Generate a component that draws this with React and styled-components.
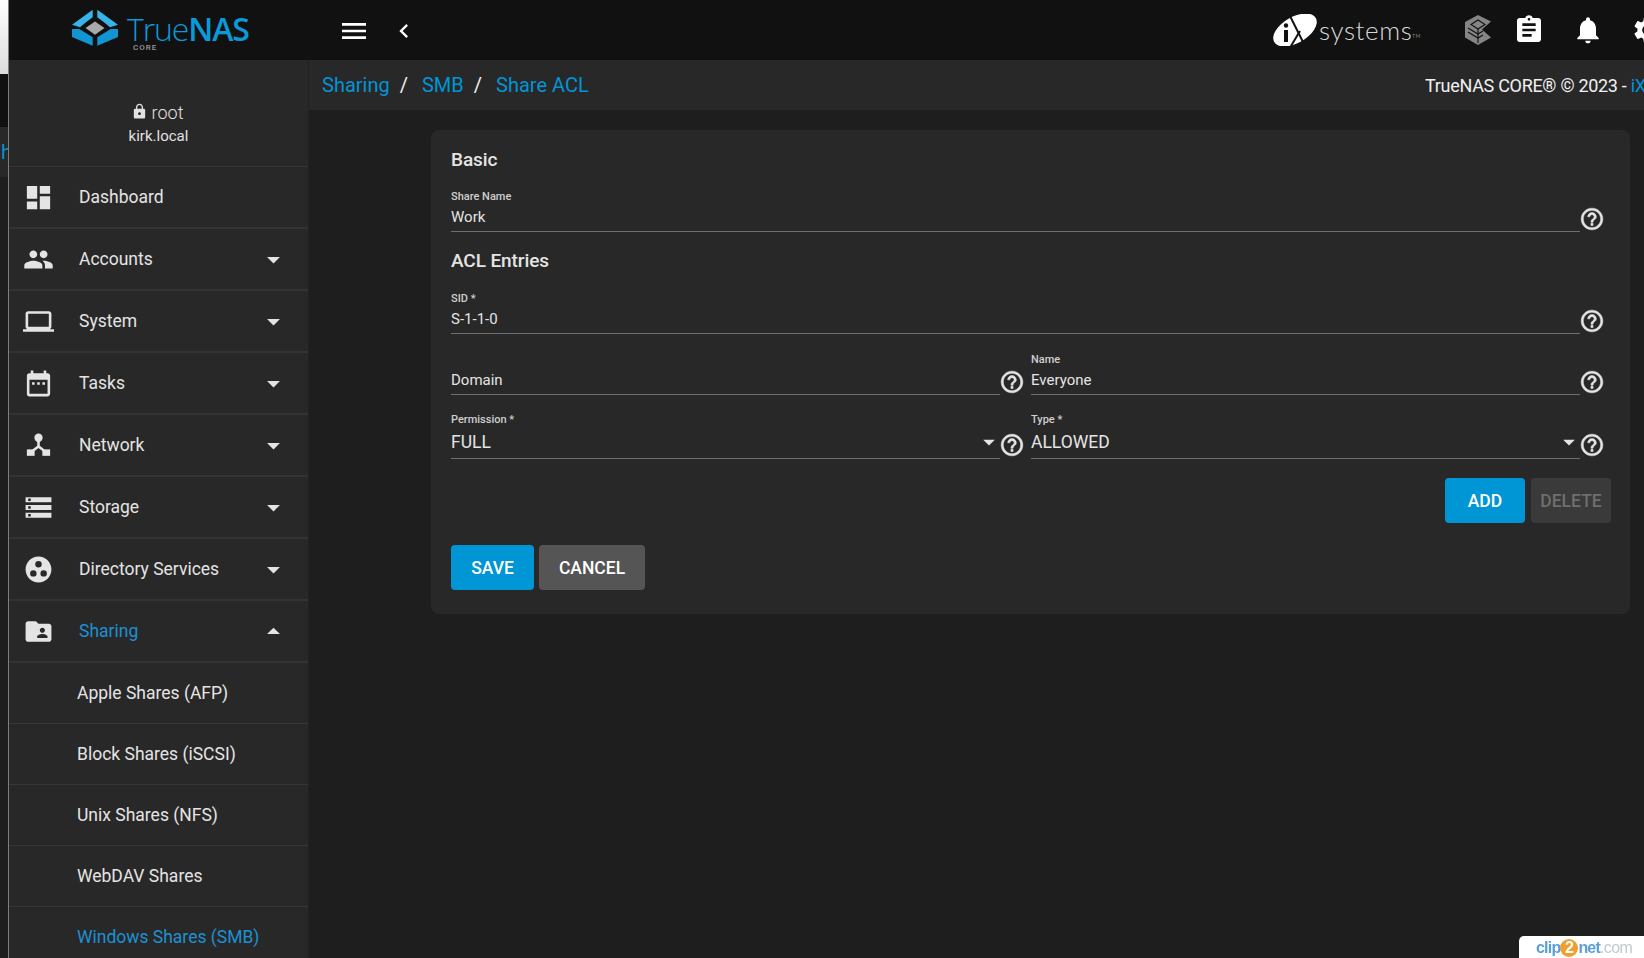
import React from 'react';
import styled, { createGlobalStyle } from 'styled-components';
import {
    MdDashboard,
    MdPeople,
    MdLaptop,
    MdDateRange,
    MdStorage,
    MdGroupWork,
    MdFolderShared,
    MdLock,
    MdMenu,
    MdChevronLeft,
    MdAssignment,
    MdNotifications,
    MdSettings,
    MdHelpOutline,
    MdArrowDropDown,
    MdArrowDropUp,
} from 'react-icons/md';

const GlobalStyle = createGlobalStyle`
    html, body {
        margin: 0;
        height: 100%;
        overflow: hidden;
        background: #1e1e1e;
        font-family: Roboto, "Liberation Sans", sans-serif;
    }
`;

const Page = styled.div`
    display: flex;
    width: 1644px;
    height: 958px;
    overflow: hidden;
    position: relative;
`;

/* the window behind this one, only a sliver of it shows */
const BackWindow = styled.div`
    flex: none;
    width: 8px;
    display: flex;
    flex-direction: column;
    background: #1e1e1e;
    border-right: 1px solid #7d7d7d;
    overflow: hidden;
`;

const BackWhite = styled.div`
    height: 74px;
    background: linear-gradient(#fff, #dcdcdc);
`;

const BackDark = styled.div`
    height: 53px;
    background: #111;
`;

const BackTab = styled.div`
    height: 50px;
    background: #282828;
    color: #0095d5;
    font-size: 20px;
    line-height: 50px;
    padding-left: 1px;
`;

const Frame = styled.div`
    flex: 1;
    min-width: 0;
    display: flex;
    flex-direction: column;
`;

const TopBar = styled.header`
    flex: none;
    height: 60px;
    background: #111;
    display: flex;
    align-items: center;
    padding-left: 63px;
    color: #fff;
`;

const LogoBlock = styled.div`
    display: flex;
    align-items: flex-start;
    gap: 9px;
    width: 266px;
`;

const LogoText = styled.div`
    display: flex;
    flex-direction: column;
    padding-top: 4px;
`;

const Wordmark = styled.div`
    font-family: "Open Sans", sans-serif;
    font-size: 32px;
    line-height: 32px;
    letter-spacing: -1.1px;
    color: #0a9ada;
    height: 30px;

    b {
        font-weight: 600;
    }
    span {
        font-weight: 300;
    }
`;

const LogoSub = styled.div`
    font-size: 8px;
    line-height: 9px;
    letter-spacing: 1px;
    color: #9a9a9a;
    margin-left: 6px;
    font-weight: 500;
`;

const TopButton = styled.div`
    display: flex;
    align-items: center;
    justify-content: center;
    width: ${(p) => p.$size || 32}px;
    height: ${(p) => p.$size || 32}px;
    font-size: ${(p) => p.$size || 32}px;
    flex: none;
`;

const TopLeft = styled.div`
    display: flex;
    align-items: center;
    gap: 20px;
    margin-top: 2px;
`;

const TopRight = styled.div`
    margin-left: auto;
    display: flex;
    align-items: center;
    gap: 27px;
    margin-right: -19px;
`;

const SystemsLogo = styled.div`
    display: flex;
    align-items: center;
    gap: 2px;
    margin-right: 17px;
`;

const SystemsWord = styled.div`
    font-family: Lato, sans-serif;
    font-weight: 300;
    font-size: 26px;
    letter-spacing: 0.6px;
    line-height: 32px;
    color: #d8d8d8;

    sup {
        font-size: 5px;
        vertical-align: top;
        position: relative;
        top: 6px;
    }
`;

const CubeWrap = styled.div`
    display: flex;
    margin-right: -5px;
`;

const Body = styled.div`
    flex: 1;
    min-height: 0;
    display: flex;
`;

const Sidebar = styled.nav`
    flex: none;
    width: 299px;
    background: #282828;
    border-right: 1px solid #222;
    box-sizing: content-box;
    overflow: hidden;
`;

const UserBox = styled.div`
    height: 107px;
    box-sizing: border-box;
    border-bottom: 1px solid #363636;
    display: flex;
    flex-direction: column;
    align-items: center;
    padding-top: 41px;
    color: #e2e2e2;
`;

const UserName = styled.div`
    display: flex;
    align-items: center;
    gap: 4px;
    font-size: 18px;
    line-height: 24px;
    font-weight: 300;
    margin-left: -3px;

    svg {
        font-size: 17px;
        margin-top: -4px;
    }
`;

const HostName = styled.div`
    font-size: 15px;
    line-height: 20px;
    margin-top: 1px;
`;

const NavRow = styled.div`
    height: 62px;
    box-sizing: border-box;
    border-bottom: 2px solid #333;
    display: flex;
    align-items: center;
    font-size: 17.5px;
    color: ${(p) => (p.$active ? '#1e90d2' : '#e4e4e4')};
`;

const NavIcon = styled.div`
    width: 59px;
    flex: none;
    display: flex;
    justify-content: center;
    color: #e4e4e4;
    font-size: 31px;
`;

const NavLabel = styled.div`
    margin-left: 11px;
    flex: 1;
`;

const NavArrow = styled.div`
    width: 31px;
    margin-right: 19px;
    display: flex;
    font-size: 31px;
    color: #e4e4e4;
`;

const SubRow = styled.div`
    height: 61px;
    box-sizing: border-box;
    border-bottom: 1px solid #363636;
    display: flex;
    align-items: center;
    padding-left: 68px;
    font-size: 17.5px;
    color: ${(p) => (p.$active ? '#1e90d2' : '#e4e4e4')};
`;

const Main = styled.main`
    flex: 1;
    min-width: 0;
    display: flex;
    flex-direction: column;
`;

const PageTitle = styled.div`
    flex: none;
    height: 50px;
    background: #282828;
    display: flex;
    align-items: center;
    padding-left: 13px;
`;

const Crumbs = styled.div`
    flex: 1;
    display: flex;
    align-items: center;
    font-size: 20px;
    color: #0095d5;
`;

const Slash = styled.span`
    color: #f0f0f0;
    margin: 0 14px 0 10px;
`;

const Copyright = styled.div`
    flex: none;
    width: 219px;
    overflow: hidden;
    white-space: nowrap;
    font-size: 18px;
    letter-spacing: -0.3px;
    color: #f0f0f0;

    span {
        color: #0095d5;
    }
`;

const Card = styled.section`
    margin: 20px 14px 0 122px;
    padding: 19px 19px 24px 20px;
    background: #282828;
    border-radius: 8px;
    color: #e4e4e4;
`;

const SectionTitle = styled.h3`
    margin: 0 0 ${(p) => p.$after}px;
    font-size: 19px;
    line-height: 22px;
    font-weight: 500;
    letter-spacing: -0.1px;
`;

const FieldRow = styled.div`
    display: grid;
    grid-template-columns: ${(p) => (p.$split ? '1fr 1fr' : '1fr')};
    gap: 5px;
    padding-right: 5px;
    margin-bottom: ${(p) => p.$after || 0}px;
`;

const FieldWrap = styled.div`
    display: flex;
    align-items: flex-end;
    min-width: 0;
`;

const Field = styled.div`
    flex: 1;
    min-width: 0;
`;

const Label = styled.div`
    height: 14px;
    font-size: 11px;
    line-height: 16px;
    font-weight: 500;
    color: #cfcfcf;
`;

const Value = styled.div`
    height: ${(p) => (p.$select ? 33 : 29)}px;
    box-sizing: border-box;
    border-bottom: 1px solid #6f6f6f;
    display: flex;
    align-items: center;
    justify-content: space-between;
    font-size: ${(p) => (p.$select ? 17.5 : 15)}px;
    padding-bottom: 1px;
    color: #e4e4e4;

    svg {
        font-size: 28px;
        margin-right: -3px;
    }
`;

const Help = styled(MdHelpOutline)`
    flex: none;
    font-size: 26px;
    margin: 0 1px ${(p) => (p.$select ? 1 : 0)}px -1px;
    color: #e4e4e4;

    path:last-child {
        stroke: currentColor;
        stroke-width: 0.5;
    }
`;

const RowActions = styled.div`
    display: flex;
    justify-content: flex-end;
    gap: 6px;
    margin-bottom: 22px;
`;

const FormActions = styled.div`
    display: flex;
    gap: 5px;
`;

const Button = styled.button`
    height: 45px;
    width: ${(p) => p.$w}px;
    padding: 0;
    border: 0;
    border-radius: 4px;
    font-family: inherit;
    font-size: 17.5px;
    font-weight: 500;
    background: ${(p) => p.$bg};
    color: ${(p) => p.$fg || '#fff'};
`;

const ClipBadge = styled.div`
    position: absolute;
    right: 0;
    bottom: 0;
    width: 125px;
    height: 22px;
    box-sizing: border-box;
    padding: 1px 0 0 17px;
    background: #fff;
    border-top-left-radius: 5px;
    font-family: "Liberation Sans", sans-serif;
    font-weight: 700;
    font-size: 16px;
    line-height: 21px;
    letter-spacing: -0.8px;
    color: #5a9fd8;
    display: flex;
    align-items: center;
    filter: blur(0.4px);

    em {
        font-style: normal;
        font-weight: 400;
        color: #c3c8d0;
        letter-spacing: -0.6px;
    }
`;

const ClipTwo = styled.span`
    width: 18px;
    height: 18px;
    border-radius: 50%;
    background: #f0a030;
    color: #fff;
    text-align: center;
    line-height: 18px;
    letter-spacing: 0;
`;

const TrueNasMark = () => (
    <svg width="46" height="37" viewBox="0 0 46 37">
        <polygon points="0,15.7 20.7,0.7 20.7,8.3 14,13.3 8,18.3" fill="#38b4e8" />
        <polygon points="46,15.7 25.3,0.7 25.3,8.3 32,13.3 38,18.3" fill="#38b4e8" />
        <polygon points="0,20 7.3,20 20.7,28.3 20.7,36.7 0,28" fill="#1295d3" />
        <polygon points="46,20 38.7,20 25.3,28.3 25.3,36.7 46,28" fill="#1295d3" />
        <polygon points="23,12.5 32.5,19 23,25.7 13.5,19" fill="#a9a9a9" />
    </svg>
);

const IxMark = () => (
    <svg width="44" height="32" viewBox="0 0 44 32">
        <ellipse cx="22" cy="16" rx="24" ry="13" fill="#fff" transform="rotate(-30 22 16)" />
        <circle cx="13" cy="11.5" r="2.2" fill="#111" />
        <rect x="11" y="16" width="4" height="12" fill="#111" />
        <line x1="17" y1="2" x2="32" y2="32" stroke="#111" strokeWidth="2" />
        <line x1="18" y1="32" x2="27" y2="17" stroke="#111" strokeWidth="2" />
    </svg>
);

const CubeMark = () => (
    <svg width="26" height="30" viewBox="0 0 26 30">
        <polygon points="13,0 26,6.5 17,14.5 26,22.5 13,30 0,22.5 0,7" fill="#858585" />
        <polygon points="13,5 20,9.5 13,14 6,9.5" fill="none" stroke="#111" strokeWidth="1.1" />
        <polyline points="3,13 13,19 18,16" fill="none" stroke="#111" strokeWidth="1.1" />
        <polyline points="3,17 13,23 18,20" fill="none" stroke="#111" strokeWidth="1.1" />
        <line x1="13" y1="14" x2="13" y2="28" stroke="#111" strokeWidth="1.1" />
    </svg>
);

const NetworkIcon = () => (
    <svg width="1em" height="1em" viewBox="0 0 24 24" fill="currentColor">
        <circle cx="12" cy="6" r="3.2" />
        <path d="M11 8h2v4.2l4.2 3.3-1.2 1.6-4-3.1-4 3.1-1.2-1.6L11 12.2z" />
        <rect x="3" y="15" width="6" height="5" />
        <rect x="15" y="15" width="6" height="5" />
    </svg>
);

const navItems = [
    { label: 'Dashboard', icon: <MdDashboard /> },
    { label: 'Accounts', icon: <MdPeople />, arrow: 'down' },
    { label: 'System', icon: <MdLaptop />, arrow: 'down' },
    { label: 'Tasks', icon: <MdDateRange />, arrow: 'down' },
    { label: 'Network', icon: <NetworkIcon />, arrow: 'down' },
    { label: 'Storage', icon: <MdStorage />, arrow: 'down' },
    { label: 'Directory Services', icon: <MdGroupWork />, arrow: 'down' },
    { label: 'Sharing', icon: <MdFolderShared />, arrow: 'up', active: true },
];

const subItems = [
    { label: 'Apple Shares (AFP)' },
    { label: 'Block Shares (iSCSI)' },
    { label: 'Unix Shares (NFS)' },
    { label: 'WebDAV Shares' },
    { label: 'Windows Shares (SMB)', active: true },
];

const FormField = ({ label, value, select }) => (
    <FieldWrap>
        <Field>
            <Label>{label}</Label>
            <Value $select={select}>
                {value}
                {select && <MdArrowDropDown />}
            </Value>
        </Field>
        <Help $select={select} />
    </FieldWrap>
);

const App = () => {
    return (
        <Page>
            <GlobalStyle />
            <BackWindow>
                <BackWhite />
                <BackDark />
                <BackTab>h</BackTab>
            </BackWindow>
            <Frame>
                <TopBar>
                    <LogoBlock>
                        <TrueNasMark />
                        <LogoText>
                            <Wordmark>
                                <span>True</span>
                                <b>NAS</b>
                            </Wordmark>
                            <LogoSub>CORE</LogoSub>
                        </LogoText>
                    </LogoBlock>
                    <TopLeft>
                        <TopButton>
                            <MdMenu />
                        </TopButton>
                        <TopButton $size={28}>
                            <MdChevronLeft />
                        </TopButton>
                    </TopLeft>
                    <TopRight>
                        <SystemsLogo>
                            <IxMark />
                            <SystemsWord>
                                systems<sup>TM</sup>
                            </SystemsWord>
                        </SystemsLogo>
                        <CubeWrap>
                            <CubeMark />
                        </CubeWrap>
                        <TopButton>
                            <MdAssignment />
                        </TopButton>
                        <TopButton>
                            <MdNotifications />
                        </TopButton>
                        <TopButton>
                            <MdSettings />
                        </TopButton>
                    </TopRight>
                </TopBar>
                <Body>
                    <Sidebar>
                        <UserBox>
                            <UserName>
                                <MdLock />
                                root
                            </UserName>
                            <HostName>kirk.local</HostName>
                        </UserBox>
                        {navItems.map((item) => (
                            <NavRow key={item.label} $active={item.active}>
                                <NavIcon>{item.icon}</NavIcon>
                                <NavLabel>{item.label}</NavLabel>
                                {item.arrow && (
                                    <NavArrow>
                                        {item.arrow === 'up' ? <MdArrowDropUp /> : <MdArrowDropDown />}
                                    </NavArrow>
                                )}
                            </NavRow>
                        ))}
                        {subItems.map((item) => (
                            <SubRow key={item.label} $active={item.active}>
                                {item.label}
                            </SubRow>
                        ))}
                    </Sidebar>
                    <Main>
                        <PageTitle>
                            <Crumbs>
                                Sharing
                                <Slash>/</Slash>
                                SMB
                                <Slash>/</Slash>
                                Share ACL
                            </Crumbs>
                            <Copyright>
                                TrueNAS CORE® © 2023 - <span>iXsystems, Inc</span>
                            </Copyright>
                        </PageTitle>
                        <Card>
                            <SectionTitle $after={18}>Basic</SectionTitle>
                            <FieldRow $after={18}>
                                <FormField label="Share Name" value="Work" />
                            </FieldRow>
                            <SectionTitle $after={19}>ACL Entries</SectionTitle>
                            <FieldRow $after={18}>
                                <FormField label="SID *" value="S-1-1-0" />
                            </FieldRow>
                            <FieldRow $split $after={17}>
                                <FormField value="Domain" />
                                <FormField label="Name" value="Everyone" />
                            </FieldRow>
                            <FieldRow $split $after={19}>
                                <FormField label="Permission *" value="FULL" select />
                                <FormField label="Type *" value="ALLOWED" select />
                            </FieldRow>
                            <RowActions>
                                <Button $w={80} $bg="#0095d5">ADD</Button>
                                <Button $w={80} $bg="#3a3a3a" $fg="#6e6e6e">DELETE</Button>
                            </RowActions>
                            <FormActions>
                                <Button $w={83} $bg="#0095d5">SAVE</Button>
                                <Button $w={106} $bg="#555">CANCEL</Button>
                            </FormActions>
                        </Card>
                    </Main>
                </Body>
            </Frame>
            <ClipBadge>
                clip<ClipTwo>2</ClipTwo>net<em>.com</em>
            </ClipBadge>
        </Page>
    );
};

export default App;
